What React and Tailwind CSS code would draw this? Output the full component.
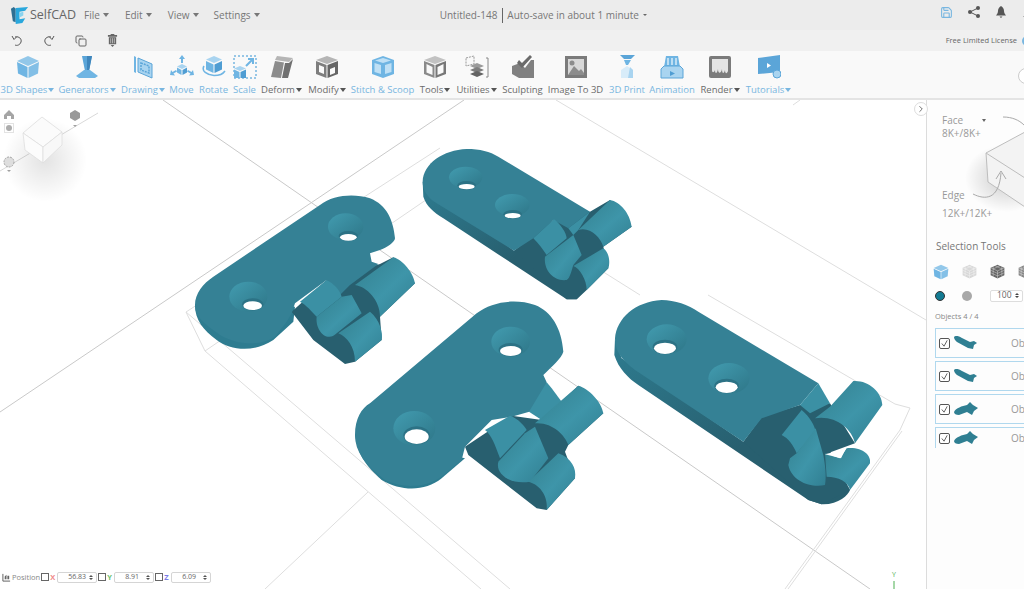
import React from "react";
import { Save, Copy, ChevronRight } from "lucide-react";

const BLUE = "text-[#78b6e0]";
const GRAY = "text-[#6b6b6b]";

const Cube = ({ c = "#6fb5e3" }) => (
  <svg viewBox="0 0 24 24" className="w-full h-full">
    <path d="M12 1 23 6 12 11 1 6Z" fill={c} opacity=".75" />
    <path d="M1 7 11.500 12V23L2 18.500Z" fill={c} />
    <path d="M23 7 12.500 12V23L22 18.500Z" fill={c} opacity=".85" />
  </svg>
);

const GridCube = ({ c }) => (
  <svg viewBox="0 0 24 24" className="w-full h-full">
    <path d="M12 1 23 6V18L12 23 1 18V6Z" fill={c} />
    <path d="M1 6 12 11 23 6M12 11V23M1 10 12 15 23 10M1 14 12 19 23 14M5 4V20M19 4V20M8 2.500 19 8M16 2.500 5 8" fill="none" stroke="#fff" strokeWidth=".8" opacity=".7" />
  </svg>
);

const icons = {
  shapes: <div className="w-[24px] h-[24px]"><Cube /></div>,
  generators: (
    <svg viewBox="0 0 24 24" className="w-[24px] h-[24px]">
      <path d="M7 1h10l-3 15h-4Z" fill="#5ba5d8" />
      <path d="M12 1h5l-3 15h-2Z" fill="#3f86bc" />
      <path d="M9 15h6l8 6-3 2H4l-3-2Z" fill="#6fb5e3" />
    </svg>
  ),
  drawing: (
    <svg viewBox="0 0 24 24" className="w-[24px] h-[24px]">
      <path d="M3 1 5 2V18L3 17Z" fill="#6fb5e3" />
      <path d="M7 3 21 9V23L7 17Z" fill="#a9d4f0" stroke="#5ba5d8" />
      <path d="M10 8 18 11V18L10 15Z" fill="none" stroke="#5ba5d8" strokeWidth="1.500" strokeDasharray="2 1" />
    </svg>
  ),
  move: (
    <svg viewBox="0 0 24 24" className="w-[24px] h-[24px]">
      <path d="M12 9 17 11.500 12 14 7 11.500Z" fill="#a9d4f0" />
      <path d="M7 12.500 11.500 15V20L7 17.500Z" fill="#6fb5e3" />
      <path d="M17 12.500 12.500 15V20L17 17.500Z" fill="#4f9dd3" />
      <path d="M12 0 15 4H13V8H11V4H9ZM0 20 1 15 2.500 17 6 15 7 16.500 3.500 18.500 5 20.500ZM24 20 23 15 21.500 17 18 15 17 16.500 20.500 18.500 19 20.500Z" fill="#6fb5e3" />
    </svg>
  ),
  rotate: (
    <svg viewBox="0 0 24 24" className="w-[24px] h-[24px]">
      <path d="M12 1 20 4.500 12 8 4 4.500Z" fill="#a9d4f0" />
      <path d="M4 6 11.500 9.500V18L4 14.500Z" fill="#6fb5e3" />
      <path d="M20 6 12.500 9.500V18L20 14.500Z" fill="#4f9dd3" />
      <path d="M2 11C-1 16 5 20 12 20.500 17 20.500 21 19 23 16" fill="none" stroke="#6fb5e3" strokeWidth="1.500" />
    </svg>
  ),
  scale: (
    <svg viewBox="0 0 24 24" className="w-[24px] h-[24px]">
      <rect x="1" y="1" width="22" height="22" fill="none" stroke="#78b6e0" strokeWidth="1.500" strokeDasharray="2 2" />
      <path d="M7 11 13 13.500 7 16 1 13.500Z" fill="#a9d4f0" />
      <path d="M1 14.500 6.500 17V23H1Z" fill="#6fb5e3" />
      <path d="M13 14.500 7.500 17V23H13Z" fill="#4f9dd3" />
      <path d="M13 11 19 5M15 4h5v5" fill="none" stroke="#6fb5e3" strokeWidth="2" />
    </svg>
  ),
  deform: (
    <svg viewBox="0 0 24 24" className="w-[24px] h-[24px]">
      <path d="M7 1 23 3 19 7 5 5Z" fill="#b5b5b5" />
      <path d="M5 6 14 7.500 11 23 1 22Z" fill="#8c8c8c" />
      <path d="M15 8 19 8 23 4 18 23 12 23Z" fill="#707070" />
    </svg>
  ),
  modify: (
    <svg viewBox="0 0 24 24" className="w-[24px] h-[24px]">
      <path d="M12 1 23 5 12 9 1 5Z" fill="#b5b5b5" />
      <path d="M1 6 11.500 10V23L1 19ZM4 10V17L9 19V12Z" fill="#7e7e7e" fillRule="evenodd" />
      <path d="M23 6 12.500 10V23L23 19ZM15 14V20L20 18V12Z" fill="#666" fillRule="evenodd" />
    </svg>
  ),
  stitch: (
    <svg viewBox="0 0 24 24" className="w-[24px] h-[24px]">
      <path d="M12 1 23 5V19L12 23 1 19V5Z" fill="#6fb5e3" />
      <path d="M12 3 20 5.500 12 8 4 5.500ZM3.500 8 10 10V19L3.500 17ZM20.500 8 14 10V19L20.500 17Z" fill="#bfe0f5" />
    </svg>
  ),
  tools: (
    <svg viewBox="0 0 24 24" className="w-[24px] h-[24px]">
      <path d="M12 1 23 5 12 9 1 5Z" fill="#c2c2c2" />
      <path d="M1 6 11.500 10V23L1 19ZM3.500 9V17.500L9.500 20V12Z" fill="#8a8a8a" fillRule="evenodd" />
      <path d="M23 6 12.500 10V23L23 19ZM14.500 12V20L20.500 17.500V9Z" fill="#777" fillRule="evenodd" />
    </svg>
  ),
  utilities: (
    <svg viewBox="0 0 24 24" className="w-[24px] h-[24px]">
      <path d="M1 3 9 1V9L1 11Z" fill="none" stroke="#999" strokeDasharray="2 1" />
      <path d="M12 8 19 11 12 14 5 11Z" fill="#9a9a9a" />
      <path d="M12 12 19 15 12 18 5 15Z" fill="#7c7c7c" />
      <path d="M12 16 19 19 12 22 5 19Z" fill="#636363" />
      <path d="M21 3H23V22H21" fill="none" stroke="#888" />
    </svg>
  ),
  sculpting: (
    <svg viewBox="0 0 24 24" className="w-[24px] h-[24px]">
      <path d="M1 11 9 8 14 13 20 5 23 5V23H8L1 19Z" fill="#808080" />
      <path d="M8 5 11 8 19 0 21 2 11 13 6 8Z" fill="#6a6a6a" />
    </svg>
  ),
  image: (
    <svg viewBox="0 0 24 24" className="w-[24px] h-[24px]">
      <rect x="1" y="1" width="22" height="22" fill="#7b7b7b" />
      <rect x="4" y="4" width="16" height="16" fill="#d8d8d8" />
      <path d="M4 20 10 11 15 16 17 14 20 18V20Z" fill="#8c8c8c" />
      <circle cx="8" cy="8" r="2.500" fill="#8c8c8c" />
    </svg>
  ),
  print: (
    <svg viewBox="0 0 24 24" className="w-[24px] h-[24px]">
      <path d="M5 0H20L16 4H9Z" fill="#5ba5d8" />
      <path d="M9 5H16L13 10H11Z" fill="#6fb5e3" />
      <path d="M12 11 18 15V23H6V15Z" fill="#d8ecf9" />
      <path d="M15 12 18 15V23H13Z" fill="#a9d4f0" />
    </svg>
  ),
  animation: (
    <svg viewBox="0 0 24 24" className="w-[24px] h-[24px]">
      <path d="M6 1H18L20 12H4Z" fill="#6fb5e3" />
      <path d="M8 3V10M12 3V10M16 3V10" stroke="#d8ecf9" strokeWidth="1.500" />
      <path d="M1 14 4 11H20L23 14V23H1Z" fill="#a9d4f0" stroke="#5ba5d8" />
      <path d="M10 16 15 18.500 10 21Z" fill="#4f9dd3" />
    </svg>
  ),
  render: (
    <svg viewBox="0 0 24 24" className="w-[24px] h-[24px]">
      <rect x="1" y="1" width="22" height="22" rx="2" fill="#7b7b7b" />
      <path d="M4 4H20V16C19 19 17 19 17 15 16 19 14 19 14 14 13 19 10 19 10 14 9 19 7 19 7 15 6 18 4 18 4 15Z" fill="#e4e4e4" />
    </svg>
  ),
  tutorials: (
    <svg viewBox="0 0 24 24" className="w-[24px] h-[24px]">
      <path d="M1 3 23 0V17L1 19Z" fill="#5ba5d8" />
      <path d="M10 8 14 10.500 10 13Z" fill="#fff" />
      <circle cx="20" cy="19" r="4" fill="#a9d4f0" stroke="#5ba5d8" />
    </svg>
  ),
};

// name, width of the slot, has a caret, blue label
const tools = [
  ["3D Shapes", 55, true, true, "shapes"],
  ["Generators", 64, true, true, "generators"],
  ["Drawing", 48, true, true, "drawing"],
  ["Move", 29, false, true, "move"],
  ["Rotate", 35, false, true, "rotate"],
  ["Scale", 27, false, true, "scale"],
  ["Deform", 47, true, false, "deform"],
  ["Modify", 44, true, false, "modify"],
  ["Stitch & Scoop", 67, false, true, "stitch"],
  ["Tools", 38, true, false, "tools"],
  ["Utilities", 45, true, false, "utilities"],
  ["Sculpting", 47, false, false, "sculpting"],
  ["Image To 3D", 59, false, false, "image"],
  ["3D Print", 44, false, true, "print"],
  ["Animation", 46, false, true, "animation"],
  ["Render", 50, true, false, "render"],
  ["Tutorials", 47, true, true, "tutorials"],
];

const Caret = ({ className = "border-t-[#666]" }) => (
  <span className={`inline-block w-0 h-0 border-x-[3.500px] border-x-transparent border-t-[4px] ml-[1px] ${className}`} />
);

const ToolItem = ({ name, width, caret, blue, icon }) => (
  <div style={{ width }} className="shrink-0 flex flex-col items-center">
    <div className="h-[30px] flex items-center justify-center pt-[2px]">{icons[icon]}</div>
    <div className={`flex items-center whitespace-nowrap text-[9.500px] leading-[14px] mt-[2px] ${blue ? BLUE : GRAY}`}>
      {name}
      {caret && <Caret className={blue ? "border-t-[#78b6e0]" : "border-t-[#555]"} />}
    </div>
  </div>
);

const Hole = ({ cx, cy, rx, ry, hx, hy, hrx, hry }) => (
  <g>
    <ellipse cx={cx} cy={cy} rx={rx} ry={ry} fill="url(#sink)" />
    <ellipse cx={hx} cy={hy - 4} rx={hrx + 4} ry={hry + 5} fill="#2c7285" />
    <ellipse cx={hx} cy={hy} rx={hrx} ry={hry} fill="#fff" />
  </g>
);

const TOP = "#358195";
const SIDE = "#2e7c90";
const DARK = "#285f6f";
const LIGHT = "#3b90a4";

const Hinges = () => (
  <g>
    {/* left hinge */}
    <g transform="translate(180 140) scale(.33333)">
      <path d="M45 495C45 540 70 570 110 600 150 630 220 640 280 600L340 545 345 500Z" fill={SIDE} />
      <path d="M335 515 440 420 600 372 640 352 705 430 600 530 605 600 525 665 495 672 400 600Z" fill={DARK} />
      <path d="M45 495C45 460 70 430 100 410L420 195C460 165 520 160 570 175 620 195 640 240 645 295 645 305 620 325 600 330L570 340 575 365 595 372 510 435 480 465 440 420 345 490 335 520 320 545 285 590C240 620 170 615 120 585 70 550 45 530 45 495Z" fill={TOP} />
      <Hole cx={205} cy={470} rx={57} ry={45} hx={218} hy={497} hrx={28} hry={13} />
      <Hole cx={497} cy={260} rx={53} ry={40} hx={505} hy={292} hrx={25} hry={10} />
      <path d="M525 435 640 352C670 360 700 400 705 430L600 530C600 480 560 440 525 435Z" fill="url(#pin)" />
      <path d="M360 485 440 420C460 430 480 450 485 470L410 530C395 515 380 495 360 485Z" fill={LIGHT} />
      <path d="M410 530 485 470 515 465 545 520 470 580C440 610 405 570 410 530Z" fill="url(#pin)" />
      <path d="M475 580 570 515C600 540 610 580 605 600L525 665C525 620 500 590 475 580Z" fill="url(#pin)" />
    </g>

    {/* top hinge */}
    <g transform="translate(410 140) scale(.33333)">
      <path d="M38 125 40 170C50 200 70 215 100 235L470 478H500L535 440 480 300 312 332Z" fill="url(#side)" />
      <path d="M312 332 432 238 540 215 600 180 665 260 580 320 595 385 530 450 500 478H470Z" fill={DARK} />
      <path d="M38 125C40 70 100 30 170 27 210 27 240 35 265 50L540 215 475 265 430 240 370 295 312 332 80 190C50 170 38 150 38 125Z" fill={TOP} />
      <Hole cx={167} cy={112} rx={50} ry={32} hx={170} hy={140} hrx={24} hry={8} />
      <Hole cx={307} cy={195} rx={52} ry={33} hx={308} hy={227} hrx={24} hry={8} />
      <path d="M475 265 540 215 505 270 490 285Z" fill={LIGHT} />
      <path d="M370 295 432 238C450 250 470 280 470 295L410 345C400 330 385 310 370 295Z" fill={LIGHT} />
      <path d="M405 350 490 285 515 345 490 375C485 390 480 415 470 420 430 425 400 390 405 350Z" fill="url(#pin)" />
      <path d="M505 270 600 180C630 185 660 220 665 260L580 320C570 290 540 260 505 270Z" fill="url(#pin)" />
      <path d="M490 378 580 325C600 340 600 370 595 385L530 450C530 420 510 385 490 378Z" fill="url(#pin)" />
    </g>

    {/* bottom hinge */}
    <g transform="translate(345 295) scale(.33333)">
      <path d="M30 420C40 480 60 510 110 555 170 590 240 590 290 550L360 490Z" fill={SIDE} />
      <path d="M360 455 500 362 590 375 700 272 775 355 670 450 660 470 690 550 605 645 575 640 370 480Z" fill={DARK} />
      <path d="M30 420C30 370 50 340 75 325L395 55C440 20 510 10 570 30 620 50 650 100 655 170 650 190 620 215 595 240L605 262 590 340 500 365 440 375 360 455 350 495 290 545C240 580 170 580 120 555 60 510 30 470 30 420Z" fill={TOP} />
      <Hole cx={208} cy={400} rx={63} ry={52} hx={215} hy={425} hrx={36} hry={22} />
      <Hole cx={497} cy={140} rx={58} ry={45} hx={497} hy={168} hrx={32} hry={15} />
      <path d="M605 262 620 280 650 320 590 375 552 350Z" fill={LIGHT} />
      <path d="M420 405 495 362C520 370 540 395 545 405L465 490C450 450 440 420 420 405Z" fill={LIGHT} />
      <path d="M460 500 540 415 570 395 610 490 555 560C500 570 450 540 460 500Z" fill="url(#pin)" />
      <path d="M570 385 700 272C730 280 770 320 775 355L670 450C660 420 620 380 570 385Z" fill="url(#pin)" />
      <path d="M550 560 640 475C680 490 695 520 690 550L605 645C610 610 590 570 550 560Z" fill="url(#pin)" />
    </g>

    {/* right hinge */}
    <g transform="translate(605 295) scale(.33333)">
      <path d="M30 130 28 180C40 220 70 250 100 270L610 615 650 628C700 630 730 600 735 585L640 400 415 440 50 190Z" fill="url(#side)" />
      <path d="M415 440 470 365 585 330 675 325 750 445 660 478 735 585 650 628 610 615Z" fill={DARK} />
      <path d="M30 130C35 70 90 20 170 15 210 15 250 30 280 50L640 265 585 330 470 370 415 440 90 225C50 195 30 170 30 130Z" fill={TOP} />
      <Hole cx={185} cy={133} rx={60} ry={45} hx={180} hy={160} hrx={33} hry={17} />
      <Hole cx={372} cy={250} rx={62} ry={46} hx={365} hy={277} hrx={33} hry={17} />
      <path d="M640 265 675 325 615 355 585 330Z" fill={LIGHT} />
      <path d="M530 420 590 345C615 365 630 395 632 410L575 475C565 450 550 430 530 420Z" fill={LIGHT} />
      <path d="M555 490 575 475 632 400 655 480C660 510 665 540 660 570 620 580 560 560 550 510Z" fill="url(#pin)" />
      <path d="M675 335 745 258C790 255 830 290 832 330L750 445C740 400 690 360 630 370Z" fill="url(#pin)" />
      <path d="M660 475 705 490 725 460C770 455 800 480 795 505L735 585C730 560 700 545 665 545Z" fill="url(#pin)" />
      <path d="M660 478 722 462 708 490Z" fill="#fff" />
    </g>
  </g>
);

const Scene = () => (
  <svg viewBox="0 100 926 489" className="absolute inset-0 w-[926px] h-[489px]">
    <defs>
      <linearGradient id="pin" x1="0" y1="0" x2="1" y2="1">
        <stop offset="0" stopColor="#33808f" />
        <stop offset=".55" stopColor="#3e95a9" />
        <stop offset="1" stopColor="#317f92" />
      </linearGradient>
      <linearGradient id="sink" x1="0" y1="0" x2="1" y2="1">
        <stop offset="0" stopColor="#429cb0" />
        <stop offset="1" stopColor="#2e7688" />
      </linearGradient>
      <linearGradient id="side" x1="0" y1="0" x2="1" y2="1">
        <stop offset="0" stopColor="#2e7c90" />
        <stop offset=".6" stopColor="#285f6f" />
        <stop offset="1" stopColor="#285f6f" />
      </linearGradient>
      <radialGradient id="shade">
        <stop offset="0" stopColor="#000" stopOpacity=".11" />
        <stop offset="1" stopColor="#000" stopOpacity="0" />
      </radialGradient>
    </defs>

    {/* grid */}
    <g fill="none" stroke="#c9c9c9" strokeWidth="1">
      <path d="M163 100 870 589" />
      <path d="M0 412 464 100" />
    </g>
    <g fill="none" stroke="#dedede" strokeWidth="1">
      <path d="M186 312 440 148" />
      <path d="M205 351 458 178" />
      <path d="M186 312 205 351" />
      <path d="M186 312 510 589" />
      <path d="M205 351 481 589" />
      <path d="M368 492 265 589" />
      <path d="M556 100 926 320" />
      <path d="M708 295 895 404 910 408" />
      <path d="M785 589 900 430 910 408" />
      <path d="M788 589 902 431" />
      <path d="M793 105 800 100" />
      <path d="M430 163 640 295" />
    </g>

    <Hinges />

    {/* view cube */}
    <path d="M0 171 98 113" stroke="#d9d9d9" fill="none" />
    <circle cx="45" cy="160" r="42" fill="url(#shade)" />
    <g stroke="#dedede" strokeWidth=".8">
      <path d="M42 117 62 132 43 147 23 133Z" fill="#fbfbfb" />
      <path d="M23 133 43 147 43 163 25 150Z" fill="#fcfcfc" />
      <path d="M62 132 43 147 43 163 62 145Z" fill="#f8f8f8" />
    </g>
    <path d="M9 110 14 115V119H11V116H7V119H4V115Z" fill="#a5a5a5" />
    <rect x="4.500" y="123.500" width="9" height="9" fill="none" stroke="#e3e3e3" />
    <circle cx="9" cy="128" r="3" fill="#adadad" />
    <path d="M75 110 80 113V118L75 121 70 118V113Z" fill="#999" />
    <path d="M73 125H77L75 127Z" fill="#a0a0a0" />
    <circle cx="9" cy="162" r="5" fill="#dedede" stroke="#a5a5a5" strokeDasharray="2 1" />
    <path d="M7 170H11L9 172Z" fill="#a0a0a0" />

    {/* axis marker */}
    <path d="M894 581V589" stroke="#4caf50" />
  </svg>
);

const NumberBox = ({ value }) => (
  <div className="w-[40px] h-[11px] shrink-0 flex items-center justify-between pl-[10px] pr-[3px] bg-white border border-[#d5d5d5] rounded-[2px] text-[7px] text-[#666] ml-[1px]">
    {value}
    <span className="flex flex-col gap-[1px]">
      <span className="w-0 h-0 border-x-[2px] border-x-transparent border-b-[2.500px] border-b-[#555]" />
      <span className="w-0 h-0 border-x-[2px] border-x-transparent border-t-[2.500px] border-t-[#555]" />
    </span>
  </div>
);

const Axis = ({ label, color, value }) => (
  <div className="flex items-center ml-[1px]">
    <span className="w-[8px] h-[8px] border border-[#666] bg-white" />
    <span className={`w-[6px] ml-[1px] text-[7.500px] font-bold ${color}`}>{label}</span>
    <NumberBox value={value} />
  </div>
);

const Thumb = ({ flat }) => (
  <svg viewBox="0 0 24 14" className="w-[24px] h-[14px] ml-[4px]">
    {flat ? (
      <path d="M0 10C2 6 8 4 13 3L16 0 19 3 24 6 20 9 18 13 13 10 5 13C2 13 0 12 0 10Z" fill="#2f7f92" />
    ) : (
      <path d="M0 1C2-1 5 0 8 2L16 6 20 5 23 7 20 9 19 13 14 12 3 6C1 4 0 3 0 1Z" fill="#2f7f92" />
    )}
  </svg>
);

const ObjectRow = ({ flat, cut }) => (
  <div className={`shrink-0 w-[100px] flex items-center pl-[3px] border border-[#b0d8ee] ${cut ? "h-[21px] border-b-0" : "h-[30px]"}`}>
    <span className="w-[11px] h-[11px] border border-[#555] rounded-[2px] bg-white flex items-center justify-center">
      <svg viewBox="0 0 10 10" className="w-[9px] h-[9px]">
        <path d="M2 5 4.500 8 8 1.500" fill="none" stroke="#555" />
      </svg>
    </span>
    <Thumb flat={flat} />
    <span className="ml-[33px] text-[10px] text-[#999]">Obj</span>
  </div>
);

const SidePanel = () => (
  <aside className="relative w-[98px] shrink-0 border-l border-[#dcdcdc] bg-[#fdfdfd] overflow-hidden text-[#999] flex flex-col">
    <svg viewBox="0 0 98 130" className="absolute left-0 top-0 w-[98px] h-[130px]">
      <defs>
        <radialGradient id="panelShade">
          <stop offset="0" stopColor="#000" stopOpacity=".2" />
          <stop offset="1" stopColor="#000" stopOpacity="0" />
        </radialGradient>
      </defs>
      <ellipse cx="80" cy="78" rx="42" ry="34" fill="url(#panelShade)" />
      <path d="M59 53 98 32V107L61 82Z" fill="#f3f3f3" />
      <path d="M59 53 98 32M59 53 61 82 98 107M59 53 98 78" fill="none" stroke="#bdbdbd" />
      <path d="M76 17C85 17 92 20 97 25" fill="none" stroke="#aaa" />
      <path d="M46 94C58 100 72 100 74 73M69 79 74 71 79 79" fill="none" stroke="#aaa" />
    </svg>
    <div className="relative pl-[15px] pt-[14px] text-[10px] leading-[12px] h-[139px] shrink-0">
      <div className="flex items-center">
        Face
        <span className="ml-[19px] w-0 h-0 border-x-[2.500px] border-x-transparent border-t-[3px] border-t-[#666]" />
      </div>
      <div className="mt-[1px]">8K+/8K+</div>
      <div className="mt-[50px]">Edge</div>
      <div className="mt-[6px]">12K+/12K+</div>
    </div>
    <div className="relative pl-[9px] text-[10px] leading-[14px] text-[#777] h-[21px] shrink-0">Selection Tools</div>
    <div className="flex items-center gap-[13px] pl-[6px] h-[23px] shrink-0 w-[120px]">
      <span className="shrink-0 w-[16px] h-[16px] flex"><Cube /></span>
      <span className="shrink-0 w-[15px] h-[15px] flex"><GridCube c="#d8d8d8" /></span>
      <span className="shrink-0 w-[15px] h-[15px] flex"><GridCube c="#666" /></span>
      <span className="shrink-0 w-[15px] h-[15px] flex"><GridCube c="#888" /></span>
    </div>
    <div className="flex items-center pl-[8px] h-[25px] shrink-0">
      <span className="shrink-0 w-[10px] h-[10px] rounded-full bg-[#137b93] border border-[#333]" />
      <span className="shrink-0 ml-[17px] w-[10px] h-[10px] rounded-full bg-[#a8a8a8]" />
      <span className="ml-[18px] w-[33px] h-[12px] flex items-center justify-between pl-[6px] pr-[3px] border border-[#ddd] rounded-[2px] bg-white text-[8.500px] text-[#666] shrink-0">
        100
        <span className="flex flex-col gap-[1px]">
          <span className="w-0 h-0 border-x-[2px] border-x-transparent border-b-[2.500px] border-b-[#444]" />
          <span className="w-0 h-0 border-x-[2px] border-x-transparent border-t-[2.500px] border-t-[#444]" />
        </span>
      </span>
    </div>
    <div className="pl-[8px] text-[7.500px] leading-[10px] text-[#888] mt-[3px] shrink-0">Objects 4 / 4</div>
    <div className="flex flex-col gap-[3px] pl-[8px] mt-[7px]">
      <ObjectRow />
      <ObjectRow />
      <ObjectRow flat />
      <ObjectRow flat cut />
    </div>
  </aside>
);

const App = () => {
  return (
    <div className="w-[1024px] h-[589px] overflow-hidden flex flex-col bg-white font-['Open_Sans',sans-serif]">
      {/* menu bar */}
      <header className="h-[30px] shrink-0 bg-[#ececec] flex items-center text-[10px] text-[#777]">
        <svg viewBox="0 0 20 20" className="ml-[10px] w-[19px] h-[19px] shrink-0">
          <path d="M1 3 4 1 6 3V17L3 16Z" fill="#2e6f93" />
          <path d="M6 2 19 1 16 5 10 6V14L16 13 13 18 6 19Z" fill="#29a7dc" />
          <path d="M10 7 14 6V10L10 12Z" fill="#89d3ef" />
        </svg>
        <span className="ml-[1px] text-[12.500px] text-[#666]">SelfCAD</span>
        <span className="ml-[8px] flex items-center">File<Caret className="ml-[3px] border-t-[#777]" /></span>
        <span className="ml-[16px] flex items-center">Edit<Caret className="ml-[3px] border-t-[#777]" /></span>
        <span className="ml-[16px] flex items-center">View<Caret className="ml-[3px] border-t-[#777]" /></span>
        <span className="ml-[15px] flex items-center">Settings<Caret className="ml-[3px] border-t-[#777]" /></span>
        <span className="ml-[180px]">Untitled-148</span>
        <span className="ml-[5px] h-[15px] border-l border-[#666]" />
        <span className="ml-[4px] whitespace-nowrap">Auto-save in about 1 minute</span>
        <span className="ml-[4px] w-0 h-0 border-x-[2px] border-x-transparent border-t-[2.500px] border-t-[#666]" />
        <div className="ml-auto flex items-center gap-[15px] -mr-[10px] mb-[6px]">
          <Save size={13} className="text-[#78b6e0]" />
          <svg viewBox="0 0 12 12" className="w-[12px] h-[12px]">
            <path d="M10 2 2 6 10 10" fill="none" stroke="#555" />
            <circle cx="10" cy="2" r="2" fill="#555" />
            <circle cx="2" cy="6" r="2" fill="#555" />
            <circle cx="10" cy="10" r="2" fill="#555" />
          </svg>
          <svg viewBox="0 0 12 12" className="w-[12px] h-[12px]">
            <path d="M6 0C4 1 3 3 3 5 3 7 2 8 1 9.500H11C10 8 9 7 9 5 9 3 8 1 6 0ZM4.500 10.500H7.500L6 12Z" fill="#555" />
          </svg>
          <svg viewBox="0 0 12 12" className="w-[12px] h-[12px]">
            <path d="M1 11 6 7 11 11Z" fill="#555" />
          </svg>
        </div>
      </header>

      {/* quick actions */}
      <div className="h-[21px] shrink-0 bg-[#f0f0f0] flex items-center">
        <svg viewBox="0 0 12 12" className="ml-[11px] w-[12px] h-[12px]">
          <path d="M4 2C8 1 11 4 10 7 9 10 6 11 4 10M1 1 3 4.500 6 1.500" fill="none" stroke="#555" />
        </svg>
        <svg viewBox="0 0 12 12" className="ml-[20px] w-[12px] h-[12px]">
          <path d="M8 2C4 1 1 4 2 7 3 10 6 11 8 10M11 1 9 4.500 6 1.500" fill="none" stroke="#555" />
        </svg>
        <Copy size={12} className="ml-[20px] text-[#666]" />
        <svg viewBox="0 0 12 16" className="ml-[20px] w-[11px] h-[15px]">
          <path d="M1 2H4V1H8V2H11V4H1ZM2 4.500H10V12H2ZM4 13H8L6 15Z" fill="#666" />
          <path d="M4 5.500V11M6 5.500V11M8 5.500V11" stroke="#ddd" strokeWidth=".7" />
        </svg>
        <span className="ml-auto mr-[5px] text-[7.500px] text-[#666] whitespace-nowrap">Free Limited License</span>
        <span className="shrink-0 -mr-[8px] w-[10px] h-[10px] rounded-full bg-[#78b6e0]" />
      </div>

      {/* tool bar */}
      <div className="relative h-[49px] shrink-0 bg-[#f9f9f9] border-b-2 border-[#e4e4e4] flex overflow-hidden">
        {tools.map(([name, width, caret, blue, icon]) => (
          <ToolItem key={name} name={name} width={width} caret={caret} blue={blue} icon={icon} />
        ))}
        <span className="absolute left-[1018px] top-[17px] w-[16px] h-[16px] rounded-full bg-white border border-[#ccc]" />
      </div>

      <div className="flex-1 min-h-0 flex">
        <main className="relative flex-1 min-w-0 bg-white">
          <Scene />
          <div className="absolute left-[2px] bottom-[6px] flex items-center text-[7.500px] text-[#888]">
            <svg viewBox="0 0 10 10" className="w-[9px] h-[9px]">
              <path d="M1 1V9H9" fill="none" stroke="#555" />
              <path d="M3 7V4L5 2V7ZM6 7V3L8 3V7Z" fill="#666" />
            </svg>
            <span className="ml-[1px]">Position</span>
            <Axis label="X" color="text-[#f08a8a]" value="56.83" />
            <Axis label="Y" color="text-[#6cbf6c]" value="8.91" />
            <Axis label="Z" color="text-[#7a7ae8]" value="6.09" />
          </div>
          <span className="absolute left-[892px] bottom-[9px] text-[7px] text-[#4caf50]">Y</span>
          <button className="absolute right-[-2px] top-[2px] z-10 w-[14px] h-[14px] rounded-full bg-white border border-[#ddd] flex items-center justify-center">
            <ChevronRight size={10} className="text-[#555]" />
          </button>
        </main>
        <SidePanel />
      </div>
    </div>
  );
};

export default App;
